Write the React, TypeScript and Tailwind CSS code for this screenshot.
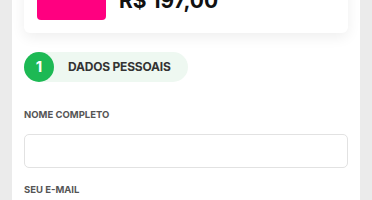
export default function App() {
  return (
    <div className="h-[200px] w-[372px] overflow-hidden bg-[#ebebeb]" style={{ fontFamily: "Inter, 'Liberation Sans', sans-serif" }}>
      <div className="mx-3 -mt-[63px] h-[300px] bg-white px-3">
        <div className="flex items-end gap-[13px] rounded-md bg-white p-[13px] shadow-[0_4px_14px_rgba(0,0,0,0.07)]">
          <div className="h-[70px] w-[69px] shrink-0 rounded-[4px] bg-[#ff0080]" />
          <span className="pb-[6px] text-[21px] font-bold leading-[26px] text-[#111]">R$ 197,00</span>
        </div>

        <div className="mt-[19px] flex h-[30px] w-[164px] items-center rounded-full bg-[#eef8f1]">
          <div className="grid h-[30px] w-[30px] place-items-center rounded-full bg-[#1db954] text-[15px] font-bold text-white">1</div>
          <span className="ml-[14px] text-[12px] font-bold tracking-[-0.2px] text-[#333]">DADOS PESSOAIS</span>
        </div>

        <div className="mt-[27px] text-[9.5px] font-bold leading-[12px] text-[#555]">NOME COMPLETO</div>
        <div className="mt-[13px] h-[34px] rounded-[5px] border border-[#e2e2e2] bg-white" />
        <div className="mt-[16px] text-[9.5px] font-bold leading-[12px] text-[#555]">SEU E-MAIL</div>
      </div>
    </div>
  );
}
